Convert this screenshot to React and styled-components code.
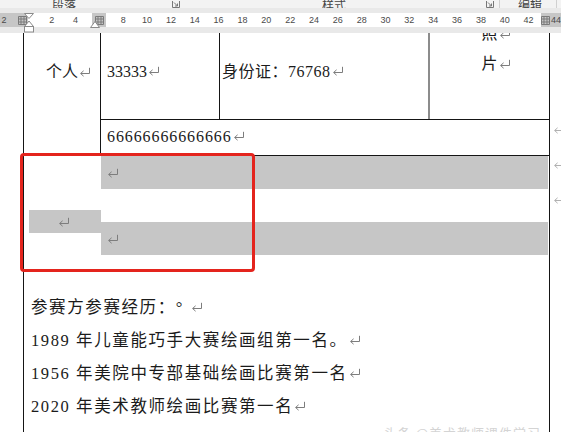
import React from "react";
import styled, { createGlobalStyle } from "styled-components";

const GlobalStyle = createGlobalStyle`
  html, body {
    margin: 0;
    padding: 0;
    background: #ffffff;
    overflow: hidden;
  }
  * {
    box-sizing: border-box;
  }
`;

const Window = styled.div`
  width: 561px;
  height: 432px;
  display: flex;
  flex-direction: column;
  overflow: hidden;
  background: #ffffff;
`;

/* ribbon group labels, only their lower half is visible */
const RibbonStrip = styled.div`
  height: 8px;
  flex: none;
  display: flex;
  align-items: flex-end;
  background: #f3f3f3;
  overflow: hidden;
`;

const GroupLabel = styled.span`
  margin-left: ${(p) => p.$ml}px;
  font-family: "Noto Sans CJK SC", sans-serif;
  font-size: 12px;
  line-height: 12px;
  margin-bottom: -3px;
  color: #444;
  white-space: nowrap;
`;

const Launcher = styled.svg`
  margin-left: ${(p) => p.$ml}px;
  width: 8px;
  height: 7px;
  flex: none;
`;

const GroupDivider = styled.span`
  margin-left: ${(p) => p.$ml}px;
  width: 1px;
  height: 8px;
  background: #d0d0d0;
  flex: none;
`;

const RulerArea = styled.div`
  height: 25px;
  flex: none;
  padding-top: 5px;
  background: #e9e9e9;
  position: relative;
`;

const RulerBand = styled.div`
  position: relative;
  height: 14px;
  background: linear-gradient(
    to right,
    #c6c6c6 0 28px,
    #ffffff 28px 541px,
    #c6c6c6 541px
  );
  display: flex;
  overflow: hidden;
`;

const TickRow = styled.div`
  display: flex;
  margin-left: -7.9px;
`;

const Tick = styled.span`
  width: 23.85px;
  flex: none;
  text-align: center;
  font-family: "Liberation Sans", sans-serif;
  font-size: 9px;
  line-height: 14px;
  color: #4a4a4a;
`;

const CornerTick = styled.span`
  font-family: "Liberation Sans", sans-serif;
  font-size: 9px;
  line-height: 14px;
  color: #4a4a4a;
  margin-left: 1px;
`;

const ColumnMarker = styled.div`
  position: absolute;
  top: 0;
  left: ${(p) => p.$left}px;
  width: ${(p) => p.$width}px;
  height: 14px;
  background: #c6c6c6;
  display: flex;
  align-items: center;
  justify-content: ${(p) => (p.$start ? "flex-start" : "center")};
`;

const IndentMarker = styled.svg`
  position: absolute;
  left: ${(p) => p.$left}px;
  top: ${(p) => p.$top}px;
`;

const Page = styled.div`
  flex: 1;
  overflow: hidden;
  position: relative;
  background: #ffffff;
  font-family: "Liberation Serif", "Noto Sans CJK SC", serif;
  font-size: 16px;
  color: #1b1b1b;
`;

const Sheet = styled.div`
  position: relative;
  margin-left: 23px;
  width: 527px;
  height: 420px;
  border-left: 1px solid #151515;
  border-right: 1px solid #151515;
`;

const TopGrid = styled.div`
  display: grid;
  grid-template-columns: 77px 119px 210px 119px;
  grid-template-rows: 86px 36px;
`;

const Cell = styled.div`
  position: relative;
  border-right: ${(p) => p.$divider || "none"};
  border-top: ${(p) => (p.$ruled ? "1px solid #151515" : "none")};
  grid-row: ${(p) => p.$row || "auto"};
  grid-column: ${(p) => p.$col || "auto"};
  padding-left: ${(p) => p.$pl || 0}px;
  padding-top: ${(p) => p.$pt || 0}px;
  text-align: ${(p) => p.$align || "left"};
  line-height: 24px;
  overflow: ${(p) => (p.$clip ? "hidden" : "visible")};
  white-space: nowrap;
`;

const PhotoStack = styled.div`
  margin-top: -14.5px;
  line-height: 30px;
  text-align: center;
`;

const Line = styled.div`
  letter-spacing: ${(p) => p.$ls || 0}px;
`;

const RowEnd = styled.span`
  position: absolute;
  left: calc(100% + 3px);
  top: ${(p) => p.$top}px;
  line-height: 10px;
`;

const BlankRow = styled.div`
  display: flex;
  height: 136px;
  border-top: 1px solid #151515;
  position: relative;
`;

const SideCell = styled.div`
  width: 77px;
  flex: none;
  display: flex;
  align-items: center;
  padding-left: 5px;
  padding-bottom: 4px;
`;

const ShadedMark = styled.div`
  width: 72px;
  height: 23px;
  background: #c6c6c6;
  display: flex;
  align-items: center;
  justify-content: center;
  padding-right: 4px;
`;

const MainCell = styled.div`
  flex: 1;
  display: flex;
  flex-direction: column;
`;

const Para = styled.div`
  height: 33px;
  margin-right: 1px;
  padding-left: 5px;
  display: flex;
  align-items: center;
  background: ${(p) => (p.$shaded ? "#c6c6c6" : "transparent")};
`;

const Notes = styled.div`
  padding-left: 7px;
  font-size: 16.5px;
  line-height: 33px;
  white-space: nowrap;
`;

const FadedLine = styled(Line)`
  color: #9a9a9a;
  margin-top: 3px;
`;

const Highlight = styled.div`
  position: absolute;
  left: -4px;
  top: 120px;
  width: 235px;
  height: 119px;
  border: 3px solid #e4241d;
  border-radius: 4px;
`;

const Watermark = styled.div`
  position: absolute;
  right: 20px;
  bottom: -10px;
  font-family: "Noto Sans CJK SC", sans-serif;
  font-size: 13px;
  letter-spacing: 1px;
  color: #d4d4d4;
  white-space: nowrap;
`;

const MarkSvg = styled.svg`
  display: inline-block;
  width: 12px;
  height: 10px;
  margin-left: 1px;
  margin-right: ${(p) => (p.$float ? -13 : 0)}px;
  vertical-align: ${(p) => (p.$float ? "0px" : "1px")};
`;

const ReturnMark = ({ tone = "#7d7d7d", float }) => (
  <MarkSvg viewBox="0 0 12 10" $float={float}>
    <path d="M10.5 0.8 V6.5 H1.8" fill="none" stroke={tone} strokeWidth="1" />
    <path d="M4.6 3.8 L1.6 6.5 L4.6 9.2" fill="none" stroke={tone} strokeWidth="1" />
  </MarkSvg>
);

const GridGlyph = () => (
  <svg width="9" height="9" viewBox="0 0 9 9">
    <path
      d="M0.5 0.5 H8.5 V8.5 H0.5 Z M0.5 3 H8.5 M0.5 6 H8.5 M3 0.5 V8.5 M6 0.5 V8.5"
      fill="none"
      stroke="#7a7a7a"
      strokeWidth="1"
    />
  </svg>
);

const ticks = ["2", "", "2", "4", "", "8", "10", "12", "14", "16", "18", "20", "22", "24", "26", "28", "30", "32", "34", "36", "38", "40", "42", ""];

export default function App() {
  return (
    <>
      <GlobalStyle />
      <Window>
        <RibbonStrip>
          <GroupLabel $ml={52}>段落</GroupLabel>
          <Launcher $ml={96} viewBox="0 0 8 7">
            <path d="M0.5 0 V6.5 H7.5 V0" fill="none" stroke="#777" />
            <path d="M2 1.5 L5.5 5 M5.5 2.5 V5 H3" fill="none" stroke="#777" />
          </Launcher>
          <GroupLabel $ml={142}>样式</GroupLabel>
          <Launcher $ml={140} viewBox="0 0 8 7">
            <path d="M0.5 0 V6.5 H7.5 V0" fill="none" stroke="#777" />
            <path d="M2 1.5 L5.5 5 M5.5 2.5 V5 H3" fill="none" stroke="#777" />
          </Launcher>
          <GroupDivider $ml={5} />
          <GroupLabel $ml={18}>编辑</GroupLabel>
          <GroupDivider $ml={14} />
        </RibbonStrip>
        <RulerArea>
          <RulerBand>
            <TickRow>
              {ticks.map((t, i) => (
                <Tick key={i}>{t}</Tick>
              ))}
            </TickRow>
            <ColumnMarker $left={17} $width={11}>
              <GridGlyph />
            </ColumnMarker>
            <ColumnMarker $left={92} $width={14}>
              <GridGlyph />
            </ColumnMarker>
            <ColumnMarker $left={541} $width={20} $start>
              <GridGlyph />
              <CornerTick>44</CornerTick>
            </ColumnMarker>
          </RulerBand>
          <IndentMarker $left={24} $top={5} width="10" height="20" viewBox="0 0 10 20">
            <path d="M0.5 0.5 H9.5 L5 5.5 Z" fill="#fff" stroke="#8a8a8a" />
            <path d="M5 8 L9.5 13.5 H0.5 Z" fill="#fff" stroke="#8a8a8a" />
            <rect x="0.5" y="13.5" width="9" height="5.5" fill="#fff" stroke="#8a8a8a" />
          </IndentMarker>
          <IndentMarker $left={90} $top={13} width="10" height="7" viewBox="0 0 10 7">
            <path d="M5 0.5 L9.5 6.5 H0.5 Z" fill="#fff" stroke="#8a8a8a" />
          </IndentMarker>
        </RulerArea>
        <Page>
          <Sheet>
            <TopGrid>
              <Cell $row="1 / span 2" $divider="1px solid #151515" $pt={27} $align="center">
                个人<ReturnMark float />
              </Cell>
              <Cell $divider="1px solid #151515" $pt={27} $pl={6}>
                33333<ReturnMark />
              </Cell>
              <Cell $divider="2px solid #8c8c8c" $pt={27} $pl={2}>
                <Line $ls={0.5}>
                  身份证：76768<ReturnMark />
                </Line>
              </Cell>
              <Cell $clip>
                <PhotoStack>
                  <div>
                    照<ReturnMark float />
                  </div>
                  <div>
                    片<ReturnMark float />
                  </div>
                </PhotoStack>
              </Cell>
              <Cell $col="2 / span 3" $ruled $pl={6} $pt={5}>
                <Line $ls={0.9}>
                  66666666666666<ReturnMark />
                </Line>
                <RowEnd $top={4}>
                  <ReturnMark tone="#b0b0b0" />
                </RowEnd>
              </Cell>
            </TopGrid>
            <BlankRow>
              <SideCell>
                <ShadedMark>
                  <ReturnMark />
                </ShadedMark>
              </SideCell>
              <MainCell>
                <Para $shaded>
                  <ReturnMark />
                </Para>
                <Para />
                <Para $shaded>
                  <ReturnMark />
                </Para>
              </MainCell>
              <RowEnd $top={3}>
                <ReturnMark tone="#b0b0b0" />
              </RowEnd>
              <RowEnd $top={38}>
                <ReturnMark tone="#b0b0b0" />
              </RowEnd>
            </BlankRow>
            <Notes>
              <Line $ls={1.6}>
                参赛方参赛经历：° <ReturnMark />
              </Line>
              <Line $ls={1.6}>
                1989 年儿童能巧手大赛绘画组第一名。<ReturnMark />
              </Line>
              <Line $ls={1.6}>
                1956 年美院中专部基础绘画比赛第一名<ReturnMark />
              </Line>
              <Line $ls={1.6}>
                2020 年美术教师绘画比赛第一名<ReturnMark />
              </Line>
              <FadedLine $ls={1.6}>
                2019 年全国青少年美术作品展优秀奖<ReturnMark />
              </FadedLine>
            </Notes>
            <Highlight />
          </Sheet>
          <Watermark>头条 @美术教师课件学习</Watermark>
        </Page>
      </Window>
    </>
  );
}
